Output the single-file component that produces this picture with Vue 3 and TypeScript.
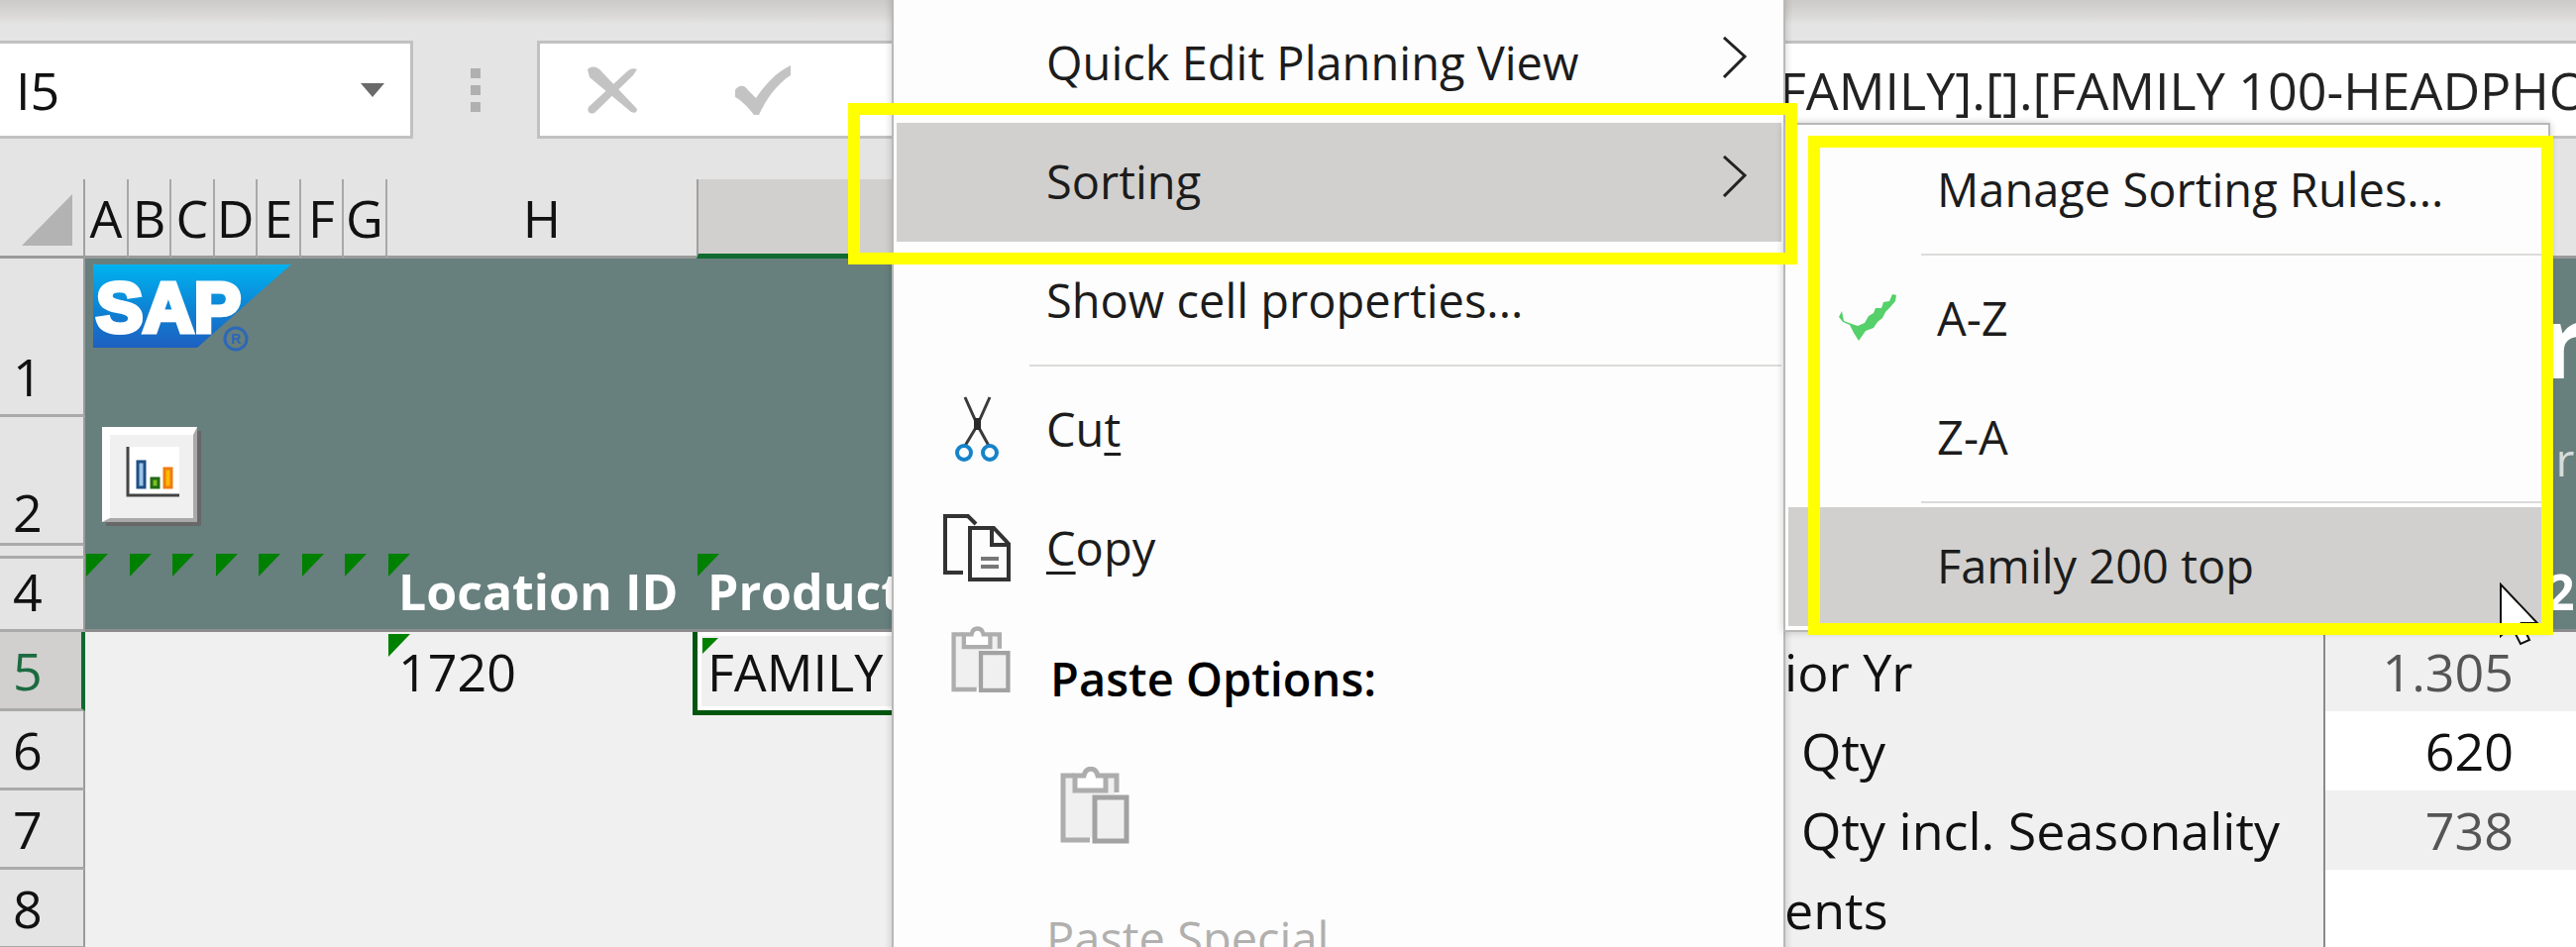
<script setup lang="ts">
import { ref } from 'vue'

interface SheetRow {
  id: string
  label: string
  figure: string
  value: string
  next: string
}

const columns = ['A', 'B', 'C', 'D', 'E', 'F', 'G']
const cellName = ref('I5')
const formula = ref('[FAMILY].[].[FAMILY 100-HEADPHONES]')

const rows: SheetRow[] = [
  { id: '1', label: '', figure: '', value: '', next: 'r' },
  { id: '2', label: '', figure: '', value: '', next: 'ir' },
  { id: '3', label: '', figure: '', value: '', next: '' },
  { id: '4', label: 'Location ID', figure: '', value: '', next: '2' },
  { id: '5', label: '1720', figure: 'ior Yr', value: '1.305', next: '' },
  { id: '6', label: '', figure: 'Qty', value: '620', next: '' },
  { id: '7', label: '', figure: 'Qty incl. Seasonality', value: '738', next: '' },
  { id: '8', label: '', figure: 'ents', value: '', next: '' },
]
const products: Record<string, string> = { '4': 'Product ID', '5': 'FAMILY 100' }
</script>

<template>
  <main class="app">
    <header class="bar">
      <div class="name-box">
        <input v-model="cellName" class="text-input" aria-label="Name box" />
        <button class="plain" aria-label="Choose a name">
          <svg width="24" height="14" viewBox="0 0 24 14"><path d="M0 0H24L12 14Z" fill="#6a6a6a" /></svg>
        </button>
      </div>
      <div class="grip"><i></i><i></i><i></i></div>
      <div class="formula-box">
        <button class="plain cancel" aria-label="Cancel">
          <svg width="54" height="50" viewBox="0 0 54 50">
            <path d="M2 4C6 0 12 1 16 6L52 44C52 47 50 49 46 47L4 12Z" fill="#c3c3c3" />
            <path d="M52 4C47 2 44 4 40 8L3 42C1 46 4 50 9 48L48 10Z" fill="#c3c3c3" />
          </svg>
        </button>
        <button class="plain enter" aria-label="Enter">
          <svg width="58" height="52" viewBox="0 0 58 52">
            <path d="M1 26C5 20 11 21 14 26L22 34C30 22 42 8 57 1V11C43 20 33 34 25 51H20C14 43 7 36 1 33Z" fill="#c3c3c3" />
          </svg>
        </button>
        <input v-model="formula" class="text-input formula" aria-label="Formula" />
      </div>
    </header>

    <section class="sheet">
      <table>
        <colgroup>
          <col class="w-head" />
          <col v-for="(c, i) in columns" :key="c" :class="i % 2 ? 'w-odd' : 'w-even'" />
          <col class="w-h" />
          <col class="w-i" />
          <col class="w-figure" />
          <col class="w-value" />
          <col />
        </colgroup>
        <thead>
          <tr>
            <th class="corner">
              <svg width="51" height="52" viewBox="0 0 51 52"><path d="M51 0V52H0Z" fill="#b3b3b3" /></svg>
            </th>
            <th v-for="c in columns" :key="c" class="letter"><div class="txt">{{ c }}</div></th>
            <th><div class="txt">H</div></th>
            <th class="chosen"></th>
            <th></th>
            <th></th>
            <th></th>
          </tr>
        </thead>
        <tbody>
          <tr v-for="r in rows" :key="r.id" :class="'row-' + r.id">
            <th scope="row"><div v-if="r.id !== '3'" class="txt">{{ r.id }}</div></th>
            <td v-for="c in columns" :key="c" :class="{ flag: r.id === '4' }"></td>
            <td :class="{ flag: r.label }"><div v-if="r.label" class="txt">{{ r.label }}</div></td>
            <td :class="{ flag: products[r.id], active: r.id === '5' }">
              <div v-if="products[r.id]" class="txt">{{ products[r.id] }}</div>
            </td>
            <td class="figure" :class="{ inset: r.figure.startsWith('Qty') }">
              <div v-if="r.figure" class="txt">{{ r.figure }}</div>
            </td>
            <td class="value"><div v-if="r.value" class="txt">{{ r.value }}</div></td>
            <td class="next"><div v-if="r.next" class="txt">{{ r.next }}</div></td>
          </tr>
        </tbody>
      </table>

      <svg class="logo" width="200" height="88" viewBox="0 0 200 88" role="img" aria-label="SAP">
        <defs>
          <linearGradient id="sap" x1="0" y1="0" x2="0" y2="1">
            <stop offset="0" stop-color="#00b3f0" />
            <stop offset="0.5" stop-color="#0c86d6" />
            <stop offset="1" stop-color="#1d5fc0" />
          </linearGradient>
        </defs>
        <path d="M0 0H200L105 84H0Z" fill="url(#sap)" />
        <text x="3" y="68" class="logo-text">SAP</text>
        <circle cx="144" cy="75" r="11" fill="none" stroke="#2c68b8" stroke-width="3" />
        <text x="139" y="80" class="logo-mark">R</text>
      </svg>

      <button class="chart" aria-label="Chart">
        <svg width="56" height="52" viewBox="0 0 56 52">
          <path d="M2 0H54V50H2Z" fill="#fff" />
          <path d="M2 0V49H54" fill="none" stroke="#444" stroke-width="3" />
          <path d="M12 15H19V41H12Z" fill="#9cc3e6" stroke="#1f4e85" stroke-width="3" />
          <path d="M26 32H33V41H26Z" fill="#7cbf20" stroke="#1f6b14" stroke-width="3" />
          <path d="M39 22H46V41H39Z" fill="#ffb900" stroke="#f07c10" stroke-width="3" />
        </svg>
      </button>
    </section>

    <div class="menu main-menu" role="menu">
      <button class="item" role="menuitem">
        <span class="icon"></span><span class="name">Quick Edit Planning View</span>
        <svg class="chevron" width="26" height="42" viewBox="0 0 26 42"><path d="M2 1L23 20L2 41" /></svg>
      </button>
      <button class="item hot" role="menuitem">
        <span class="icon"></span><span class="name">Sorting</span>
        <svg class="chevron" width="26" height="42" viewBox="0 0 26 42"><path d="M2 1L23 20L2 41" /></svg>
      </button>
      <button class="item" role="menuitem"><span class="icon"></span><span class="name">Show cell properties...</span></button>
      <hr />
      <button class="item" role="menuitem">
        <span class="icon">
          <svg width="44" height="66" viewBox="0 0 44 66" fill="none">
            <path d="M10 1L23 30L34 50M35 1L22 30L10 50" stroke="#3b3b3b" stroke-width="3" />
            <path d="M19 22H26V34H19Z" fill="#2b2b2b" />
            <circle cx="9" cy="57" r="7" stroke="#1583c9" stroke-width="4" />
            <circle cx="35" cy="57" r="7" stroke="#1583c9" stroke-width="4" />
          </svg>
        </span>
        <span class="name">Cu<u>t</u></span>
      </button>
      <button class="item" role="menuitem">
        <span class="icon">
          <svg width="68" height="68" viewBox="0 0 68 68" fill="none" stroke="#333" stroke-width="4">
            <path d="M20 59H2V2H25L33 10" />
            <path d="M27 14H51L66 30V66H27Z" />
            <path d="M49 15V31H65" />
            <path d="M38 45H56M38 53H56" stroke="#777" />
          </svg>
        </span>
        <span class="name"><u>C</u>opy</span>
      </button>
      <div class="item heading">
        <span class="icon">
          <svg width="60" height="68" viewBox="0 0 70 78" fill="none" stroke="#adadad" stroke-width="5">
            <path d="M5 11H55V28H34V72H5Z" fill="#f0f0f0" stroke="none" />
            <path d="M14 9H3V74H30M48 9H57V26" />
            <path d="M15 24V9H24C26 0 36 0 38 9H46V24Z" fill="#fff" />
            <path d="M35 31H67V75H35Z" fill="#f0f0f0" stroke="#a2a2a2" />
          </svg>
        </span>
        <span class="name">Paste Options:</span>
      </div>
      <div class="options">
        <button class="plain" aria-label="Paste">
          <svg width="70" height="78" viewBox="0 0 70 78" fill="none" stroke="#adadad" stroke-width="5">
            <path d="M5 11H55V28H34V72H5Z" fill="#f0f0f0" stroke="none" />
            <path d="M14 9H3V74H30M48 9H57V26" />
            <path d="M15 24V9H24C26 0 36 0 38 9H46V24Z" fill="#fff" />
            <path d="M35 31H67V75H35Z" fill="#f0f0f0" stroke="#a2a2a2" />
          </svg>
        </button>
      </div>
      <button class="item off" role="menuitem" disabled><span class="icon"></span><span class="name">Paste Special...</span></button>
    </div>

    <div class="menu sub-menu" role="menu">
      <button class="item" role="menuitem"><span class="icon"></span><span class="name">Manage Sorting Rules...</span></button>
      <hr />
      <button class="item" role="menuitem">
        <span class="icon">
          <svg width="60" height="48" viewBox="0 0 60 48">
            <path d="M1 23L4 17L6 27L14 30L20 32L27 29L31 22L36 19L38 14L44 14L46 8L52 7L55 0L59 1L58 7L52 14L48 18L45 24L40 28L36 34L28 37L21 47L16 39L12 31L5 28Z" fill="#55d06a" />
          </svg>
        </span>
        <span class="name">A-Z</span>
      </button>
      <button class="item" role="menuitem"><span class="icon"></span><span class="name">Z-A</span></button>
      <hr />
      <button class="item hot" role="menuitem"><span class="icon"></span><span class="name">Family 200 top</span></button>
    </div>

    <svg class="cursor" width="42" height="64" viewBox="0 0 42 64">
      <path d="M1 2V54L12 44L21 62L30 58L22 41H38Z" fill="#fff" stroke="#111" stroke-width="2" />
    </svg>
    <div class="mark mark-item"></div>
    <div class="mark mark-sub"></div>
  </main>
</template>

<style>
body {
  margin: 0;
  background: #f0f0f0;
}
</style>

<style scoped>
.app {
  position: relative;
  height: 100vh;
  overflow: hidden;
  display: flex;
  flex-direction: column;
  background: #f0f0f0;
  color: #111;
  font: 52px/60px "Open Sans", "Noto Sans", sans-serif;
}
button,
input {
  font: inherit;
  color: inherit;
  border: 0;
  padding: 0;
  margin: 0;
  background: none;
  text-align: left;
}
svg {
  display: block;
}
.bar {
  display: flex;
  align-items: stretch;
  flex: none;
  box-sizing: border-box;
  height: 181px;
  padding: 41px 0;
  background: linear-gradient(#cccac8, #dad9d7 16px, #e4e4e4 24px);
}
.name-box,
.formula-box {
  display: flex;
  align-items: center;
  box-sizing: border-box;
  background: #fff;
  border: 3px solid #c1c1c1;
}
.name-box {
  width: 417px;
  border-left: 0;
  padding: 0 26px 0 16px;
}
.text-input {
  flex: 1;
  min-width: 0;
  height: 80px;
  outline: 0;
}
.grip {
  width: 125px;
  display: flex;
  flex-direction: column;
  align-items: center;
  justify-content: center;
  gap: 7px;
}
.grip i {
  width: 10px;
  height: 10px;
  background: #b0b0b0;
}
.formula-box {
  flex: 1;
  min-width: 0;
  border-right: 0;
}
.cancel {
  margin-left: 46px;
}
.enter {
  margin-left: 96px;
}
.formula {
  margin-left: 980px;
  color: #222;
}
.sheet {
  position: relative;
  isolation: isolate;
}
table {
  width: 100%;
  table-layout: fixed;
  border-collapse: separate;
  border-spacing: 0;
}
.w-head {
  width: 86px;
}
.w-even {
  width: 44px;
}
.w-odd {
  width: 43px;
}
.w-h {
  width: 312px;
}
.w-i {
  width: 1098px;
}
.w-figure {
  width: 546px;
}
.w-value {
  width: 214px;
}
th,
td {
  position: relative;
  box-sizing: border-box;
  padding: 0;
  font-weight: 400;
  text-align: left;
  vertical-align: bottom;
  white-space: nowrap;
}
.txt {
  padding-bottom: 8px;
}
thead th {
  height: 80px;
  background: #e4e4e4;
  border-bottom: 3px solid #9a9a9a;
  text-align: center;
}
thead .corner {
  padding: 0 11px 10px 22px;
  border-right: 2px solid #a0a0a0;
}
.letter {
  border-right: 2px solid #a8a8a8;
}
thead .chosen {
  background: #d1d0ce;
  border-left: 2px solid #a0a0a0;
  border-bottom: 5px solid #0f6b2f;
}
tbody th {
  padding-left: 13px;
  background: #e4e4e4;
  border-right: 2px solid #9a9a9a;
  border-bottom: 3px solid #aaa;
}
tbody tr {
  height: 80px;
}
tbody .row-1 {
  height: 160px;
}
tbody .row-2 {
  height: 130px;
}
.row-2 th .txt {
  padding-bottom: 1px;
}
tbody .row-3 {
  height: 13px;
}
tbody .row-4 {
  height: 74px;
}
.row-1 td,
.row-2 td,
.row-3 td,
.row-4 td {
  background: #677f7d;
  color: #fff;
}
.row-4 td {
  border-bottom: 3px solid #8c8c8c;
  font-weight: 700;
  font-size: 50px;
}
td {
  padding-left: 11px;
}
.row-5 th {
  background: #d1d0ce;
  color: #1c6b40;
  border-right: 4px solid #0f6b2f;
}
.row-5 td .txt,
.row-6 td .txt,
.row-7 td .txt,
.row-8 td .txt {
  padding-bottom: 10px;
}
.flag::before {
  content: "";
  position: absolute;
  left: 1px;
  top: -5px;
  width: 22px;
  height: 23px;
  background: #008000;
  clip-path: polygon(0 0, 100% 0, 0 100%);
}
.row-5 .flag::before {
  top: 2px;
}
.row-5 .active::before {
  left: 6px;
  top: 6px;
  width: 16px;
  height: 16px;
  z-index: 1;
}
.active::after {
  content: "";
  position: absolute;
  inset: 0 0 -4px -4px;
  border: solid #00560f;
  border-width: 0 4px 5px 5px;
  box-shadow: inset 0 0 0 4px #fff;
}
.active .txt {
  position: relative;
  z-index: 1;
}
td.figure {
  padding-left: 0;
  border-right: 2px solid #8a8a8a;
}
td.inset {
  padding-left: 17px;
}
td.value {
  padding-right: 24px;
  text-align: right;
}
td.next {
  padding-left: 9px;
  overflow: hidden;
}
.row-5 .value,
.row-7 .value {
  color: #555;
}
.row-6 .value,
.row-6 .next,
.row-8 .value,
.row-8 .next {
  background: #fff;
}
.row-1 td.next {
  padding: 0 0 40px 4px;
  font-size: 100px;
  font-weight: 700;
}
.row-2 td.next {
  padding: 0 0 50px 7px;
  font-size: 46px;
  color: #d6dcdb;
}
.logo {
  position: absolute;
  left: 94px;
  top: 86px;
}
.logo-text {
  font: 700 71px "Liberation Sans", Arial, sans-serif;
  fill: #fff;
  stroke: #fff;
  stroke-width: 5px;
}
.logo-mark {
  font: 700 14px "Liberation Sans", Arial, sans-serif;
  fill: #2c68b8;
}
.chart {
  position: absolute;
  left: 103px;
  top: 250px;
  box-sizing: border-box;
  width: 96px;
  height: 96px;
  padding: 0 0 8px 16px;
  background: #f0f0f0;
  border: solid;
  border-width: 8px 4px 4px 8px;
  border-color: #fff #a9a9a9 #a9a9a9 #fff;
  box-shadow: 4px 4px 0 #686868;
}
.menu {
  position: absolute;
  box-sizing: border-box;
  background: #fdfdfd;
  border: 2px solid #b9b8b6;
  box-shadow: 0 0 8px rgba(0, 0, 0, 0.2);
  color: #1c1c1c;
  font-size: 47px;
}
.main-menu {
  left: 900px;
  top: -2px;
  width: 902px;
  padding: 4px 2px 0 3px;
}
.sub-menu {
  left: 1800px;
  top: 124px;
  width: 774px;
  padding: 6px 5px 4px 3px;
}
.item {
  display: flex;
  align-items: center;
  box-sizing: border-box;
  width: 100%;
  height: 120px;
  padding-bottom: 2px;
}
.hot {
  background: #d1d0ce;
}
.icon {
  box-sizing: border-box;
  width: 151px;
  padding-left: 10px;
  display: flex;
  justify-content: center;
}
.sub-menu .icon {
  width: 150px;
}
.name {
  flex: 1;
}
.name u {
  text-decoration-thickness: 3px;
  text-underline-offset: 6px;
}
.chevron {
  margin: 0 34px 10px 0;
  fill: none;
  stroke: #222;
  stroke-width: 3px;
}
hr {
  height: 2px;
  margin: 4px 0 4px 134px;
  border: 0;
  background: #dcdbd9;
}
.heading {
  height: 140px;
  font-weight: 600;
  color: #000;
  padding-bottom: 0;
}
.heading .icon {
  padding: 0 0 36px 18px;
}
.heading .name {
  padding: 2px 0 0 4px;
}
.options {
  display: flex;
  align-items: center;
  box-sizing: border-box;
  height: 134px;
  padding: 0 0 16px 165px;
}
.off {
  color: #b1b0ae;
}
.cursor {
  position: absolute;
  left: 2523px;
  top: 588px;
}
.mark {
  position: absolute;
  box-sizing: border-box;
  border: 12px solid #ff0;
  pointer-events: none;
}
.mark-item {
  left: 856px;
  top: 104px;
  width: 958px;
  height: 163px;
}
.mark-sub {
  left: 1825px;
  top: 137px;
  width: 752px;
  height: 504px;
}
</style>
